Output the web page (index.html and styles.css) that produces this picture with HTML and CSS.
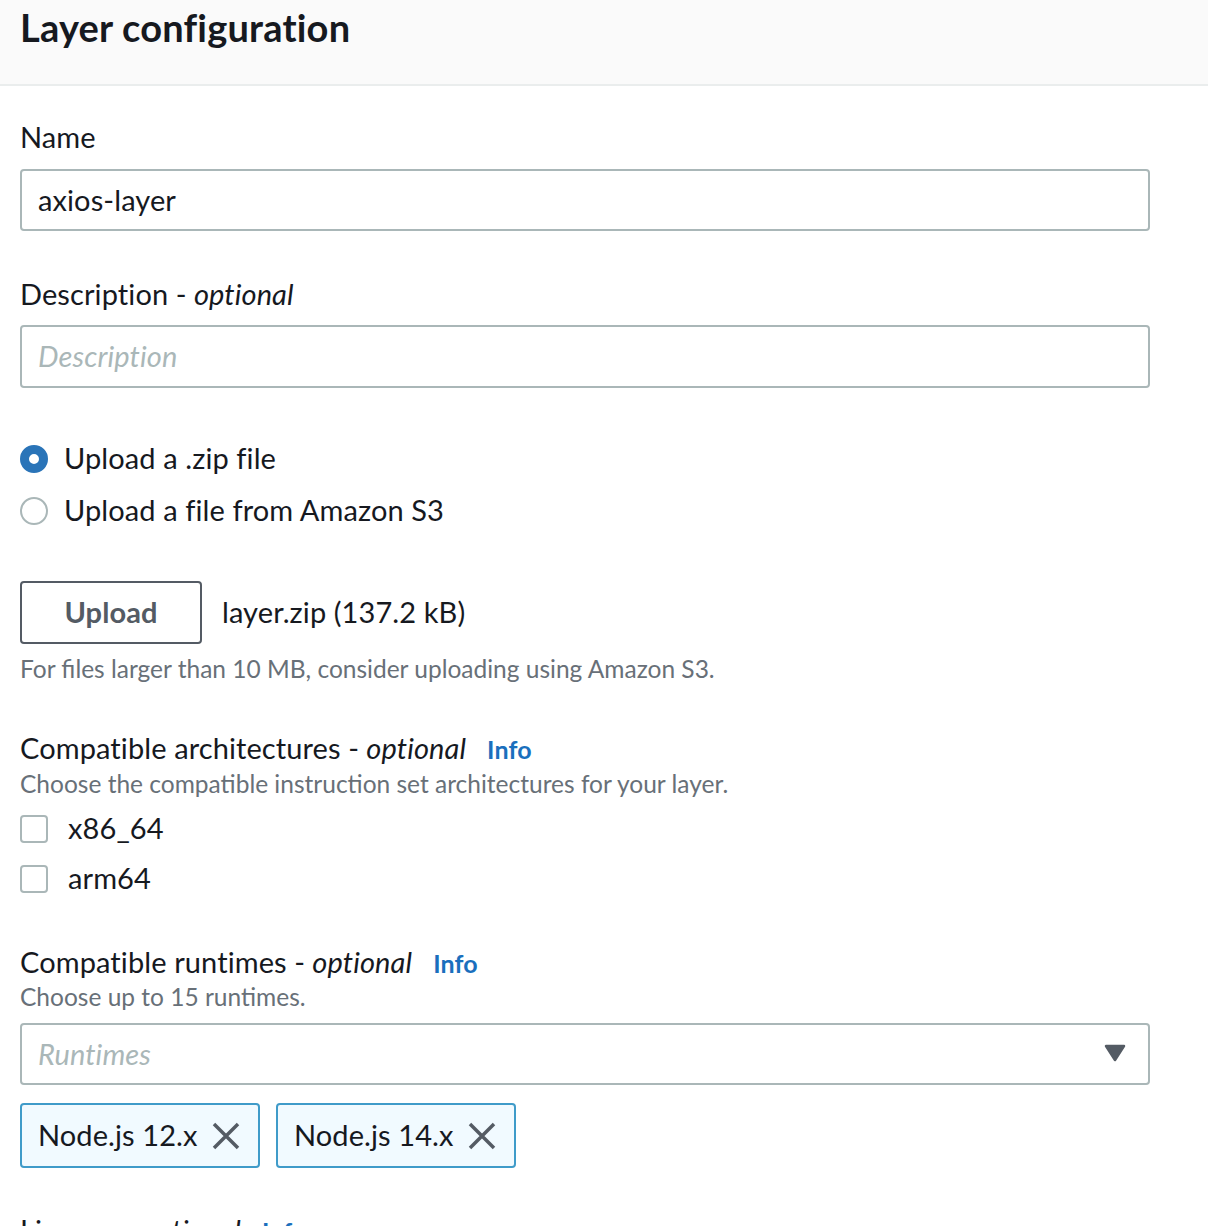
FILE: index.html
```html
<!DOCTYPE html>
<html lang="en">
<head>
<meta charset="utf-8">
<title>Layer configuration</title>
<link rel="stylesheet" href="styles.css">
</head>
<body>
<div class="panel">
  <div class="panel-header">
    <h2 class="panel-title">Layer configuration</h2>
  </div>
  <div class="panel-body">
    <div class="field field-name">
      <div class="label">Name</div>
      <div class="input">axios-layer</div>
    </div>

    <div class="field field-desc">
      <div class="label">Description - <i>optional</i></div>
      <div class="input placeholder">Description</div>
    </div>

    <div class="radio-group">
      <div class="radio-row"><span class="radio checked"></span><span>Upload a .zip file</span></div>
      <div class="radio-row"><span class="radio"></span><span>Upload a file from Amazon S3</span></div>
    </div>

    <div class="upload-row">
      <div class="btn">Upload</div>
      <span class="file-name">layer.zip (137.2 kB)</span>
    </div>
    <div class="hint">For files larger than 10 MB, consider uploading using Amazon S3.</div>

    <div class="field field-arch">
      <div class="label">Compatible architectures - <i>optional</i><a class="info">Info</a></div>
      <div class="desc">Choose the compatible instruction set architectures for your layer.</div>
      <div class="check-row"><span class="checkbox"></span><span>x86_64</span></div>
      <div class="check-row"><span class="checkbox"></span><span>arm64</span></div>
    </div>

    <div class="field field-runtime">
      <div class="label">Compatible runtimes - <i>optional</i><a class="info">Info</a></div>
      <div class="desc">Choose up to 15 runtimes.</div>
      <div class="input select placeholder">
        <span>Runtimes</span>
        <svg class="caret" width="22" height="18" viewBox="0 0 22 18"><path d="M2 2 L20 2 L11 16 Z" fill="#545b64" stroke="#545b64" stroke-width="2.5" stroke-linejoin="round"/></svg>
      </div>
      <div class="tokens">
        <div class="token"><span>Node.js 12.x</span><svg class="x" width="28" height="28" viewBox="0 0 28 28"><path d="M2 2 L26 26 M26 2 L2 26" stroke="#545b64" stroke-width="3.5"/></svg></div>
        <div class="token"><span>Node.js 14.x</span><svg class="x" width="28" height="28" viewBox="0 0 28 28"><path d="M2 2 L26 26 M26 2 L2 26" stroke="#545b64" stroke-width="3.5"/></svg></div>
      </div>
    </div>

    <div class="field field-license">
      <div class="label">License - <i>optional</i><a class="info">Info</a></div>
    </div>
  </div>
</div>
</body>
</html>
```
FILE: styles.css
```css
* { box-sizing: border-box; }
html, body {
  margin: 0;
  padding: 0;
  background: #ffffff;
}
body {
  font-family: Lato, "Noto Sans", "Liberation Sans", sans-serif;
  color: #16191f;
  font-size: 29px;
  letter-spacing: 0.1px;
  overflow: hidden;
}
.panel-header {
  height: 86px;
  background: #fafafa;
  border-bottom: 2px solid #eaeded;
  padding: 3px 20px 0;
}
.panel-title {
  margin: 0;
  font-size: 38px;
  font-weight: 700;
  line-height: 48px;
  color: #16191f;
  letter-spacing: 0.2px;
}
.panel-body {
  padding: 31px 20px 0;
}
.label {
  font-size: 29px;
  line-height: 40px;
  height: 40px;
  display: flex;
  align-items: baseline;
  white-space: nowrap;
}
.label i { font-style: italic; margin-left: 0.25em; }
.info {
  color: #1a6fbd;
  font-weight: 700;
  font-size: 25px;
  margin-left: 21px;
}
.input {
  width: 1130px;
  height: 62px;
  border: 2px solid #aab7b8;
  border-radius: 4px;
  padding: 0 16px 2px;
  display: flex;
  align-items: center;
  font-size: 29px;
  margin-top: 12px;
}
.placeholder {
  color: #aab7b8;
  font-style: italic;
}
.field-desc { margin-top: 43px; }
.field-desc .input { margin-top: 11px; height: 63px; }

.radio-group { margin-top: 45px; }
.radio-row {
  height: 52px;
  display: flex;
  align-items: center;
  gap: 16px;
}
.radio-row span:last-child { margin-top: -3px; }
.radio {
  width: 28px;
  height: 28px;
  border-radius: 50%;
  border: 2px solid #aab7b8;
  background: #fff;
  flex: none;
}
.radio.checked {
  border: 9px solid #2a74b8;
}

.upload-row {
  margin-top: 44px;
  display: flex;
  align-items: center;
  gap: 20px;
}
.file-name { margin-top: -2px; }
.btn {
  width: 182px;
  height: 63px;
  border: 2px solid #545b64;
  border-radius: 4px;
  display: flex;
  align-items: center;
  justify-content: center;
  font-weight: 700;
  color: #545b64;
  font-size: 29px;
  padding-bottom: 2px;
}
.hint, .desc {
  color: #687078;
  font-size: 24.5px;
  line-height: 32px;
  letter-spacing: 0;
}
.hint { margin-top: 9px; }

.field-arch { margin-top: 43px; }
.field-arch .desc { margin-bottom: 4px; }
.check-row {
  height: 50px;
  display: flex;
  align-items: center;
  gap: 20px;
}
.check-row span:last-child { margin-top: -3px; }
.checkbox {
  width: 28px;
  height: 28px;
  border: 2px solid #aab7b8;
  border-radius: 4px;
  flex: none;
}

.field-runtime { margin-top: 38px; }
.field-runtime .desc { margin-top: -1px; }
.select {
  margin-top: 10px;
  justify-content: space-between;
  padding-right: 22px;
}
.tokens {
  margin-top: 18px;
  display: flex;
  gap: 16px;
}
.token {
  width: 240px;
  height: 65px;
  border: 2px solid #3f9bc9;
  border-radius: 4px;
  background: #f1faff;
  display: flex;
  align-items: center;
  justify-content: space-between;
  padding: 0 18px 0 16px;
  font-size: 29px;
}
.token span { margin-top: -2px; }
.field-license { margin-top: 42px; }
```
